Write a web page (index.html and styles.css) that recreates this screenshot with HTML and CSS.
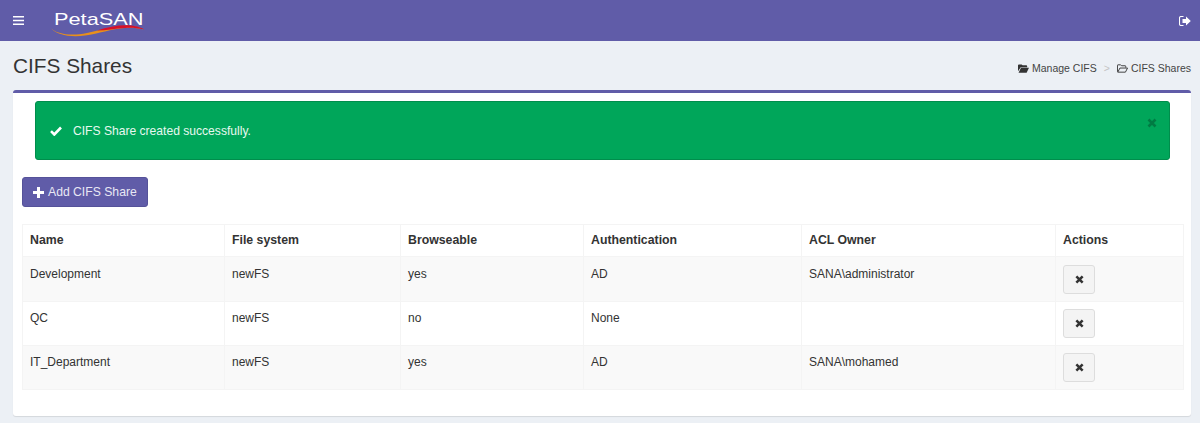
FILE: index.html
```html
<!DOCTYPE html>
<html lang="en">
<head>
<meta charset="utf-8">
<title>CIFS Shares</title>
<link rel="stylesheet" href="styles.css">
</head>
<body>
<header class="topbar">
  <div class="topbar-left">
    <svg class="icon-bars" viewBox="0 0 11 9" width="11" height="9"><path d="M0 0h11v1.6H0zM0 3.7h11v1.6H0zM0 7.4h11V9H0z" fill="#fff"/></svg>
    <div class="logo">
      <span class="logo-text">PetaSAN</span>
      <svg class="logo-swoosh" viewBox="0 0 94 14" width="94" height="14"><path d="M0 3C5 9 20 11.500 36 8C52 4.500 68 0 78 1C84 1.500 90 3 93 4.500C86 3 80 2.500 74 3C60 4 48 8.500 34 10.500C20 12.500 5 10 0 3Z" fill="#e8901c"/><path d="M46 5.500C58 1.500 70 -.5 80 .5C86 1 91 3 93.500 4.500C86 3 80 2.500 74 3C64 3.500 55 5.500 46 5.500Z" fill="#d8102a"/></svg>
    </div>
  </div>
  <svg class="icon-signout" viewBox="0 0 12 10" width="12" height="10"><path d="M4.500 0.500H2A1.500 1.500 0 0 0 .5 2v6A1.500 1.500 0 0 0 2 9.500h2.500" fill="none" stroke="#fff" stroke-width="1.100"/><path d="M7 .5L11.800 5L7 9.500V7H3.500V3H7z" fill="#fff"/></svg>
</header>

<section class="page-head">
  <h1 class="page-title">CIFS Shares</h1>
  <ol class="crumbs">
    <li class="crumb">
      <svg class="icon-folder" viewBox="0 0 12 9" width="11" height="9"><path d="M0 1a1 1 0 0 1 1-1h3l1 1h4a1 1 0 0 1 1 1v1H3L0 7.500zM3.300 3.800H12L9.400 9H0.600z" fill="#333"/></svg>
      Manage CIFS
    </li>
    <li class="crumb-sep">&gt;</li>
    <li class="crumb">
      <svg class="icon-folder" viewBox="0 0 12 9" width="11" height="9"><path d="M.5 8V1a.5.5 0 0 1 .5-.5h3l1 1h4a.5.5 0 0 1 .5.500V3.500M.8 8.500h8.400L11.500 4H3.200z" fill="none" stroke="#333" stroke-width="1"/></svg>
      CIFS Shares
    </li>
  </ol>
</section>

<main class="box">
  <div class="alert">
    <svg class="icon-check" viewBox="0 0 12 10" width="12" height="10"><path d="M1 5.200L4.300 8.500L11 1.500" fill="none" stroke="#fff" stroke-width="2.600"/></svg>
    <span class="alert-text">CIFS Share created successfully.</span>
    <svg class="alert-close" viewBox="0 0 10 10" width="10" height="10"><path d="M1.500 1.500L8.500 8.500M8.500 1.500L1.500 8.500" stroke="#000" stroke-width="2.600"/></svg>
  </div>

  <button class="btn-add" type="button">
    <svg viewBox="0 0 11 11" width="11" height="11"><path d="M4 0h3v4h4v3H7v4H4V7H0V4h4z" fill="#fff"/></svg>
    <span>Add CIFS Share</span>
  </button>

  <table class="shares">
    <colgroup>
      <col class="c1"><col class="c2"><col class="c3"><col class="c4"><col class="c5"><col class="c6">
    </colgroup>
    <thead>
      <tr><th>Name</th><th>File system</th><th>Browseable</th><th>Authentication</th><th>ACL Owner</th><th>Actions</th></tr>
    </thead>
    <tbody>
      <tr>
        <td>Development</td><td>newFS</td><td>yes</td><td>AD</td><td>SANA\administrator</td>
        <td><button class="btn-del" type="button" aria-label="Delete"><svg viewBox="0 0 10 10" width="9" height="9"><path d="M1.500 1.500L8.500 8.500M8.500 1.500L1.500 8.500" stroke="#333" stroke-width="2.800"/></svg></button></td>
      </tr>
      <tr>
        <td>QC</td><td>newFS</td><td>no</td><td>None</td><td></td>
        <td><button class="btn-del" type="button" aria-label="Delete"><svg viewBox="0 0 10 10" width="9" height="9"><path d="M1.500 1.500L8.500 8.500M8.500 1.500L1.500 8.500" stroke="#333" stroke-width="2.800"/></svg></button></td>
      </tr>
      <tr>
        <td>IT_Department</td><td>newFS</td><td>yes</td><td>AD</td><td>SANA\mohamed</td>
        <td><button class="btn-del" type="button" aria-label="Delete"><svg viewBox="0 0 10 10" width="9" height="9"><path d="M1.500 1.500L8.500 8.500M8.500 1.500L1.500 8.500" stroke="#333" stroke-width="2.800"/></svg></button></td>
      </tr>
    </tbody>
  </table>
</main>
</body>
</html>
```

FILE: styles.css
```css
* { box-sizing: border-box; }
html, body { margin: 0; padding: 0; }
body {
  background: #ecf0f5;
  color: #333;
  font-family: "Liberation Sans", Arial, sans-serif;
  font-size: 12px;
  line-height: 1.4;
  height: 423px;
  overflow: hidden;
}
.topbar {
  height: 41px;
  background: #605ca8;
  display: flex;
  align-items: center;
  justify-content: space-between;
  padding: 0 9px 0 13px;
}
.topbar-left { display: flex; align-items: center; gap: 27px; }
.icon-bars { display: block; }
.logo { position: relative; width: 94px; height: 26px; }
.logo-text {
  display: block;
  width: 69px;
  margin-left: 3px;
  color: #fff;
  font-size: 17px;
  line-height: 24px;
  transform: scaleX(1.28);
  transform-origin: left center;
}
.logo-swoosh { position: absolute; left: 0; top: 17px; }
.page-head {
  display: flex;
  justify-content: space-between;
  align-items: center;
  height: 49px;
  padding: 0 9px 0 13px;
}
.page-title {
  margin: 0;
  font-size: 20.800px;
  font-weight: 400;
  line-height: 50px;
}
.crumbs {
  display: flex;
  align-items: center;
  gap: 7px;
  list-style: none;
  margin: 6px 0 0;
  padding: 0;
  font-size: 10.500px;
  color: #444;
}
.crumb { display: flex; align-items: center; gap: 3px; }
.crumb-sep { color: #c4c4c4; }
.box {
  margin: 0 9px 0 13px;
  height: 326px;
  background: #fff;
  border-top: 3px solid #605ca8;
  border-radius: 3px;
  box-shadow: 0 1px 1px rgba(0, 0, 0, 0.100);
  padding: 8px 8px 0 9px;
}
.alert {
  position: relative;
  display: flex;
  align-items: center;
  gap: 11px;
  height: 59px;
  margin: 0 13px 17px 13px;
  padding: 1px 14px 0;
  background: #00a65a;
  border: 1px solid #008d4c;
  border-radius: 3px;
  color: #fff;
}
.alert-text { color: #e8f8f0; font-size: 12.100px; }
.alert-close {
  position: absolute;
  top: 16px;
  right: 12px;
  opacity: 0.250;
}
.btn-add {
  display: flex;
  align-items: center;
  gap: 4px;
  width: 126px;
  height: 30px;
  padding: 0 0 0 10px;
  background: #605ca8;
  border: 1px solid #555299;
  border-radius: 3px;
  color: #e8e8f4;
  font: inherit;
  font-size: 12.200px;
}
.btn-add span { position: relative; top: 1px; }
.shares {
  width: 1161px;
  margin-top: 17px;
  border-collapse: collapse;
  table-layout: fixed;
  border: 1px solid #f4f4f4;
}
.c1 { width: 202px; }
.c2 { width: 176px; }
.c3 { width: 183px; }
.c4 { width: 218px; }
.c5 { width: 254px; }
.c6 { width: 128px; }
.shares th, .shares td {
  border: 1px solid #f4f4f4;
  text-align: left;
  vertical-align: top;
}
.shares th {
  padding: 7px;
  font-size: 12.300px;
  line-height: 17px;
  font-weight: 700;
}
.shares td {
  padding: 7px;
  line-height: 19px;
}
.shares tbody tr:first-child td { padding-top: 8px; }
.shares tbody tr:nth-child(odd) { background: #f9f9f9; }
.btn-del {
  display: flex;
  align-items: center;
  justify-content: center;
  width: 32px;
  height: 29px;
  padding: 0;
  background: #f4f4f4;
  border: 1px solid #ddd;
  border-radius: 3px;
}
```
